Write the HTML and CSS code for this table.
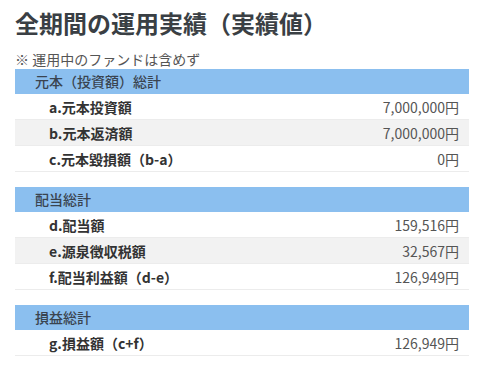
FILE: index.html
```html
<!DOCTYPE html>
<html lang="ja">
<head>
<meta charset="UTF-8">
<meta name="viewport" content="width=device-width, initial-scale=1.0">
<title>全期間の運用実績</title>
<link rel="stylesheet" href="styles.css">
</head>
<body>

<h1 class="title">全期間の運用実績（実績値）</h1>
<p class="note">※ 運用中のファンドは含めず</p>

<!-- 元本 -->
<div class="block">
  <div class="block-head">元本（投資額）総計</div>
  <div class="row"><span class="label">a.元本投資額</span><span class="val">7,000,000円</span></div>
  <div class="row"><span class="label">b.元本返済額</span><span class="val">7,000,000円</span></div>
  <div class="row"><span class="label">c.元本毀損額（b-a）</span><span class="val">0円</span></div>
</div>

<!-- 配当 -->
<div class="block">
  <div class="block-head">配当総計</div>
  <div class="row"><span class="label">d.配当額</span><span class="val">159,516円</span></div>
  <div class="row"><span class="label">e.源泉徴収税額</span><span class="val">32,567円</span></div>
  <div class="row"><span class="label">f.配当利益額（d-e）</span><span class="val">126,949円</span></div>
</div>

<!-- 損益 -->
<div class="block">
  <div class="block-head">損益総計</div>
  <div class="row"><span class="label">g.損益額（c+f）</span><span class="val">126,949円</span></div>
</div>

</body>
</html>
```

FILE: styles.css
```css
body {
  margin: 0; padding: 6px 11px 0 15px;
  font-family: "Noto Sans CJK JP", "Noto Sans", sans-serif;
  background: #fff; color: #333;
}
.title { margin: 0 0 10px; font-size: 24px; line-height: 33px; font-weight: 700; color: #3a3f44; }
.note  { margin: 0; font-size: 14px; line-height: 20px; color: #555; }

.block { margin-bottom: 15px; }
.block-head {
  height: 25px; line-height: 25px; padding-left: 20px;
  background: #8bbfef; font-size: 14px; font-weight: 500; color: #3a4450;
}
.row {
  display: flex; justify-content: space-between; align-items: center;
  height: 25px; padding: 0 10px 0 34px;
  font-size: 14px; border-bottom: 1px solid #ececec;
}
.row:nth-of-type(odd) { background: #f2f2f2; }
.label { font-weight: 700; color: #333; }
.val   { color: #555; }
```
